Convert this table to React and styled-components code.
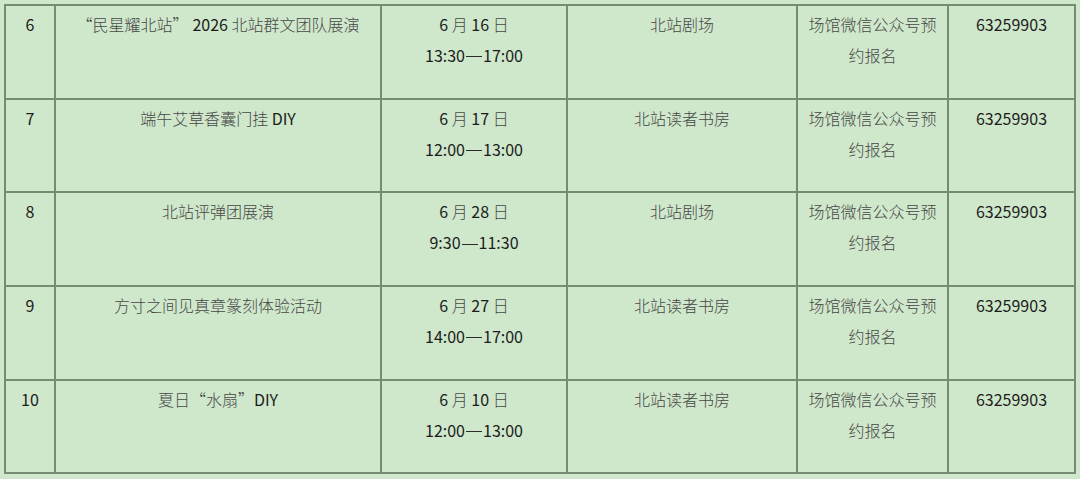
import React from "react";
import styled, { createGlobalStyle } from "styled-components";

const Global = createGlobalStyle`
  html, body { margin: 0; padding: 0; background: #cfe7cb; }
  body { font-family: "Noto Sans CJK SC", "Noto Sans", sans-serif; }
`;

const Page = styled.div`
  padding: 4px 0 0 4px;
  width: 1080px;
  height: 479px;
  box-sizing: border-box;
  overflow: hidden;
`;

const Table = styled.table`
  border-collapse: collapse;
  table-layout: fixed;
  width: 1071px;
`;

const Row = styled.tr`
  height: 93.7px;
`;

const Cell = styled.td`
  width: ${(p) => p.$w}px;
  border: 2px solid #778a74;
  padding: 3px 4px 0;
  vertical-align: top;
  text-align: center;
  font-size: 16px;
  font-weight: 300;
  line-height: 31px;
  color: #474747;
  box-sizing: border-box;
`;

const Num = styled.span`
  color: #1c1c1c;
  font-weight: 400;
`;

const Gap = styled.span`
  display: inline-block;
  width: ${(p) => p.$w}px;
`;

const Dash = styled.span`
  display: inline-block;
  width: 16px;
  height: 1px;
  margin: 0 1px;
  vertical-align: middle;
  background: #2a2a2a;
  position: relative;
  top: -1px;
`;

const Line = styled.div`
  white-space: nowrap;
`;

const widths = [50, 326, 186, 230, 151, 127];

const rows = [
  {
    n: "6",
    name: (
      <>
        “民星耀北站”<Gap $w={4} />
        <Num>2026</Num> 北站群文团队展演
      </>
    ),
    day: "16",
    time: "13:30—17:00",
    place: "北站剧场",
  },
  {
    n: "7",
    name: (
      <>
        端午艾草香囊门挂 <Num>DIY</Num>
      </>
    ),
    day: "17",
    time: "12:00—13:00",
    place: "北站读者书房",
  },
  { n: "8", name: <>北站评弹团展演</>, day: "28", time: "9:30—11:30", place: "北站剧场" },
  { n: "9", name: <>方寸之间见真章篆刻体验活动</>, day: "27", time: "14:00—17:00", place: "北站读者书房" },
  {
    n: "10",
    name: (
      <>
        夏日“水扇”<Num>DIY</Num>
      </>
    ),
    day: "10",
    time: "12:00—13:00",
    place: "北站读者书房",
  },
];

function splitTime(t) {
  const [a, b] = t.split("—");
  return (
    <>
      <Num>{a}</Num>
      <Dash aria-label="—" />
      <Num>{b}</Num>
    </>
  );
}

export default function App() {
  return (
    <>
      <Global />
      <Page>
        <Table>
          <tbody>
            {rows.map((r) => (
              <Row key={r.n}>
                <Cell $w={widths[0]}>
                  <Num>{r.n}</Num>
                </Cell>
                <Cell $w={widths[1]}>
                  <Line>{r.name}</Line>
                </Cell>
                <Cell $w={widths[2]}>
                  <Line>
                    <Num>6</Num> 月 <Num>{r.day}</Num> 日
                  </Line>
                  <Line>{splitTime(r.time)}</Line>
                </Cell>
                <Cell $w={widths[3]}>
                  <Line>{r.place}</Line>
                </Cell>
                <Cell $w={widths[4]}>
                  <Line>场馆微信公众号预</Line>
                  <Line>约报名</Line>
                </Cell>
                <Cell $w={widths[5]}>
                  <Num>63259903</Num>
                </Cell>
              </Row>
            ))}
          </tbody>
        </Table>
      </Page>
    </>
  );
}
